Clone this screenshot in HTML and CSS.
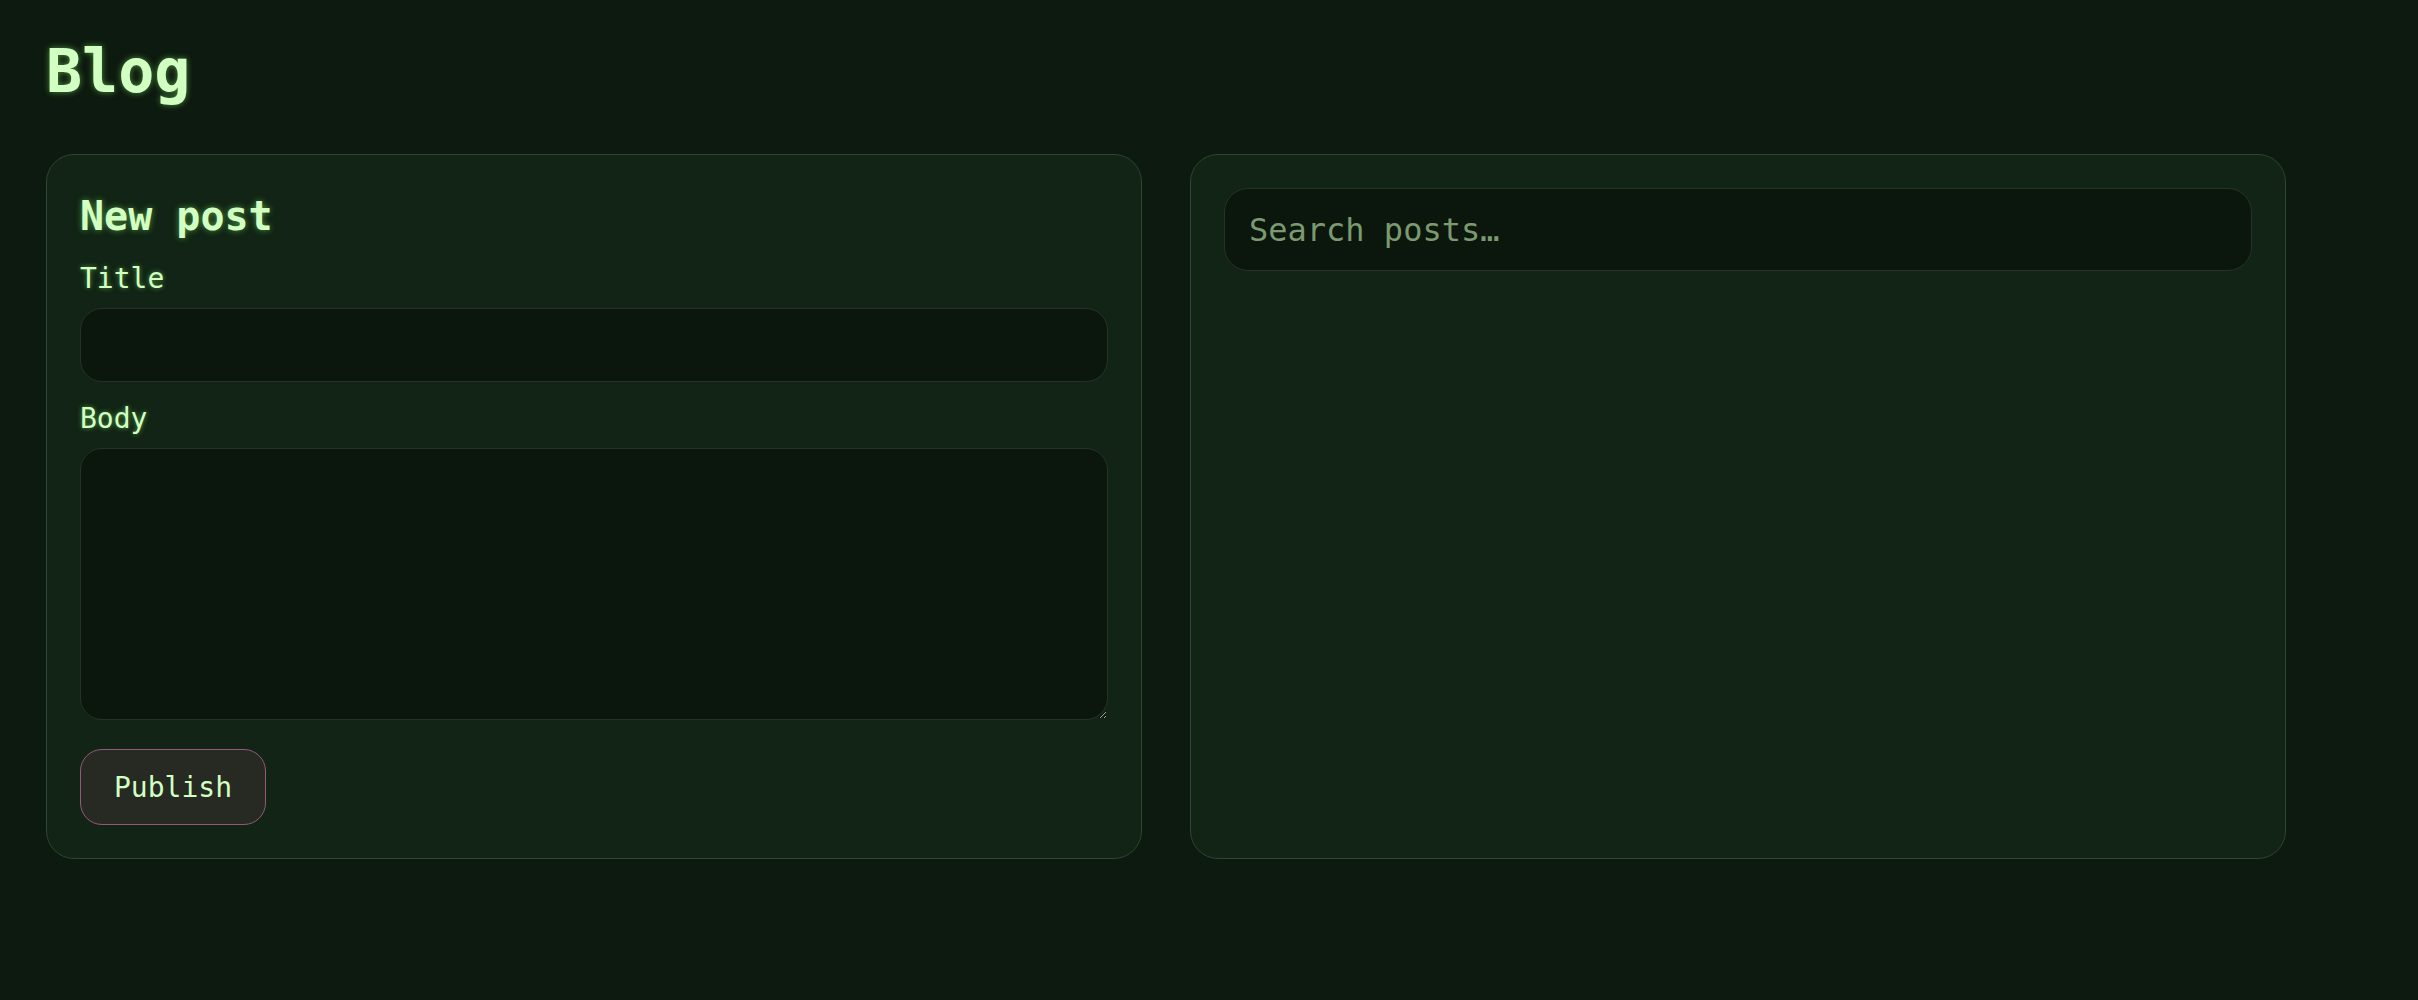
FILE: index.html
```html
<!DOCTYPE html>
<html lang="en">
<head>
<meta charset="utf-8">
<title>Blog</title>
<link rel="stylesheet" href="styles.css">
</head>
<body>
<main class="page">
  <h1 class="page-title">Blog</h1>
  <div class="layout">
    <section class="card editor">
      <h2 class="card-title">New post</h2>
      <label class="field-label" for="title">Title</label>
      <input class="text-input" id="title" type="text">
      <label class="field-label body-label" for="body">Body</label>
      <textarea class="text-area" id="body"></textarea>
      <div class="actions">
        <button class="btn" type="button">Publish</button>
      </div>
    </section>
    <section class="card list">
      <input class="search-input" type="search" placeholder="Search posts…">
    </section>
  </div>
</main>
</body>
</html>
```
FILE: styles.css
```css
:root { color-scheme: dark; }
* { box-sizing: border-box; }
html, body { margin: 0; padding: 0; }
body {
  background: #0d1a0f;
  color: #d2ffc2;
  font-family: "DejaVu Sans Mono", "Liberation Mono", monospace;
}
.page {
  padding: 36px 46px 40px;
}
.page-title {
  margin: 0 0 48px;
  font-size: 60px;
  line-height: 70px;
  font-weight: 700;
  color: #d2ffc2;
  text-shadow: 0 0 6px rgba(140, 255, 110, 0.5);
}
.layout {
  display: grid;
  grid-template-columns: 1fr 1fr;
  gap: 48px;
  max-width: 2240px;
  align-items: stretch;
}
.card {
  background: #112415;
  border: 1px solid #2f4630;
  border-radius: 28px;
  padding: 33px;
  display: flex;
  flex-direction: column;
  align-items: stretch;
}
.card-title {
  margin: 5px 0 22px;
  font-size: 40px;
  line-height: 47px;
  font-weight: 700;
  text-shadow: 0 0 6px rgba(140, 255, 110, 0.5);
}
.field-label {
  display: block;
  font-size: 28px;
  line-height: 33px;
  text-shadow: 0 0 5px rgba(140, 255, 110, 0.55);
}
.body-label { margin-top: 20px; }
.text-input,
.text-area,
.search-input {
  display: block;
  width: 100%;
  background: #0b170d;
  border: 1px solid #283128;
  border-radius: 22px;
  color: #d2ffc2;
  font-family: "DejaVu Sans Mono", "Liberation Mono", monospace;
  outline: none;
}
.text-input {
  margin-top: 13px;
  height: 74px;
  padding: 0 24px;
  font-size: 28px;
}
.text-area {
  margin-top: 13px;
  height: 272px;
  padding: 20px 24px;
  font-size: 28px;
  resize: vertical;
}
.actions {
  margin-top: 29px;
  display: flex;
}
.btn {
  height: 76px;
  padding: 0 33px;
  background: #272a22;
  border: 1.5px solid #96577a;
  border-radius: 22px;
  color: #d2ffc2;
  font-family: "DejaVu Sans Mono", "Liberation Mono", monospace;
  font-size: 28px;
}
.search-input {
  height: 83px;
  padding: 0 24px;
  font-size: 32px;
  border-radius: 24px;
  -webkit-appearance: none;
  appearance: none;
}
.search-input::placeholder {
  color: #7b9a70;
  opacity: 1;
}
.search-input::-webkit-search-cancel-button { display: none; }
```
